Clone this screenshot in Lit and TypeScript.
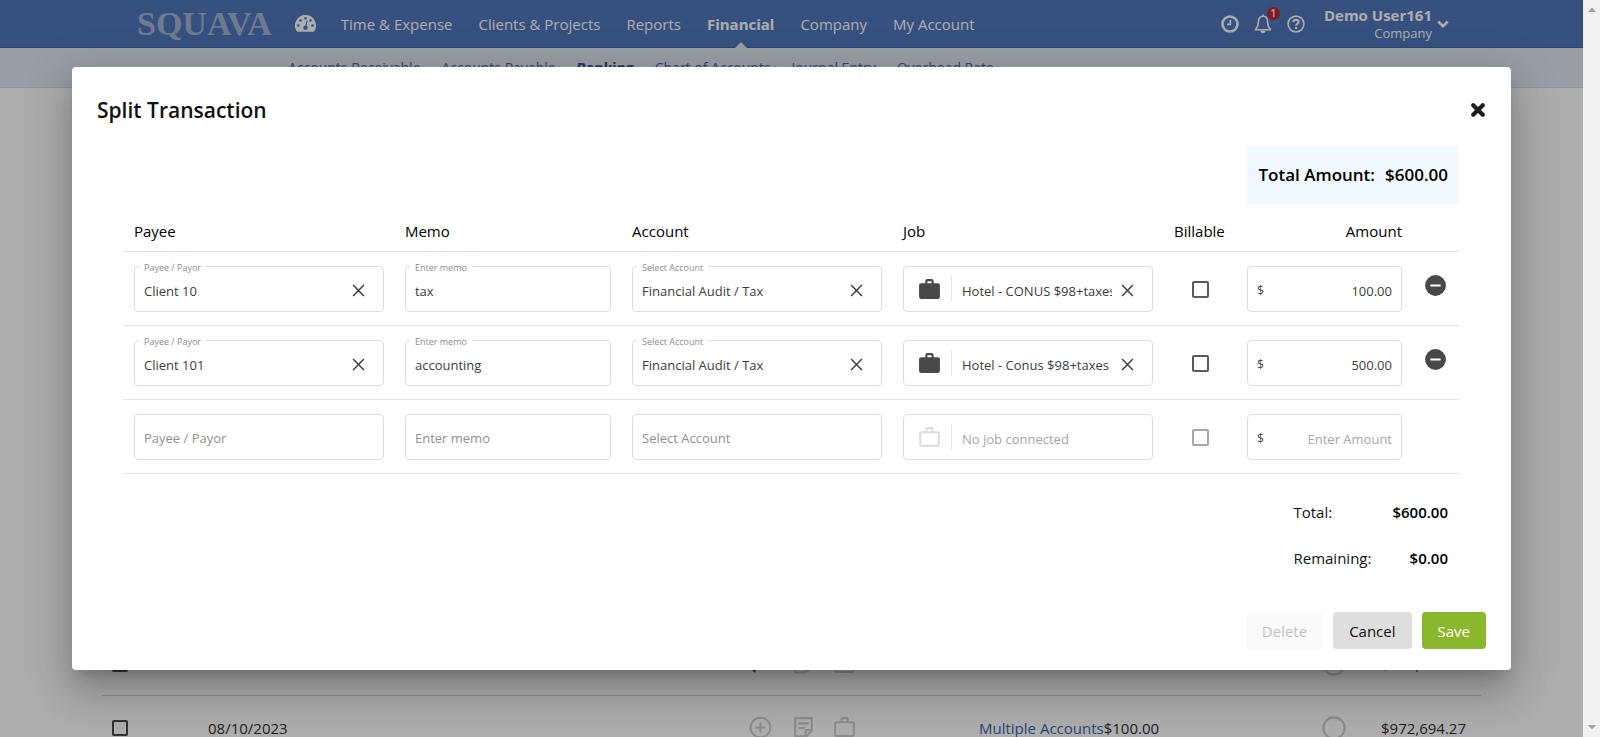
import { LitElement, html, svg, css, nothing } from "lit";
import { customElement, state } from "lit/decorators.js";
import { classMap } from "lit/directives/class-map.js";

const icon = (box: string, size: number, body: unknown, cls = "") =>
  html`<svg class=${cls} viewBox=${box} width=${size} height=${size} aria-hidden="true">${body}</svg>`;

const WORK = svg`<path fill="currentColor" d="M20 6h-4V4c0-1.100-.9-2-2-2h-4c-1.100 0-2 .9-2 2v2H4c-1.110 0-2 .89-2 2v11c0 1.110.89 2 2 2h16c1.110 0 2-.89 2-2V8c0-1.110-.89-2-2-2zm-6 0h-4V4h4v2z"/>`;
const WORK_OUTLINE = svg`<path fill="currentColor" fill-rule="evenodd" d="M14 6V4h-4v2h4zM4 8v11h16V8H4zm16-2c1.110 0 2 .89 2 2v11c0 1.110-.89 2-2 2H4c-1.110 0-2-.89-2-2V8c0-1.110.89-2 2-2h4V4c0-1.110.89-2 2-2h4c1.110 0 2 .89 2 2v2h4z"/>`;
const REMOVE = svg`<circle cx="12" cy="12" r="10" fill="#484848"/><rect x="7" y="11" width="10" height="2" rx="0.500" fill="#fff"/>`;
const CLEAR = svg`<path d="M1 1 11 11M11 1 1 11" stroke="#3a3a3a" stroke-width="1.300" fill="none"/>`;
const ADD_CIRCLE = svg`<g fill="none" stroke="currentColor" stroke-width="2"><circle cx="12" cy="12" r="9.500"/><path d="M12 7v10M7 12h10"/></g>`;
const NOTE = svg`<g fill="none" stroke="currentColor" stroke-width="2"><path d="M4 3h16v12l-5.500 5.500H4z"/><path d="M20 14.500h-6v6M7 8h10M7 12.500h6"/></g>`;
const RING = svg`<circle cx="12" cy="12" r="9.800" fill="none" stroke="currentColor" stroke-width="2"/>`;

const FONT = css`"Open Sans", "Noto Sans", sans-serif`;

interface Split {
  payee: string;
  memo: string;
  account: string;
  job: string;
  amount: string;
}

@customElement("split-dialog")
export class SplitDialog extends LitElement {
  static styles = css`
    :host {
      display: block;
      box-sizing: border-box;
      width: calc(100% - 144px);
      padding: 25px 25px 21px;
      border-radius: 4px;
      background: #fff;
      color: #111;
      font: 15px/20px ${FONT};
      box-shadow: 0 11px 15px -7px rgba(0, 0, 0, 0.2), 0 24px 38px 3px rgba(0, 0, 0, 0.14),
        0 9px 46px 8px rgba(0, 0, 0, 0.12);
    }
    svg {
      display: block;
    }
    button {
      font: inherit;
      color: inherit;
      border: 0;
      padding: 0;
      background: none;
      cursor: pointer;
    }
    .head {
      display: flex;
      align-items: center;
      justify-content: space-between;
      height: 36px;
    }
    h2 {
      margin: 0;
      font-size: 21px;
      font-weight: 600;
      line-height: 36px;
    }
    .body {
      padding: 18px 27px 0 26px;
    }
    .total-box {
      display: flex;
      align-items: center;
      gap: 10px;
      width: fit-content;
      height: 58px;
      margin-left: auto;
      padding: 0 11px;
      background: #f1f9ff;
      font-size: 17px;
      font-weight: 600;
      color: #000;
    }
    table {
      width: 100%;
      table-layout: fixed;
      border-collapse: separate;
      border-spacing: 0;
    }
    .c-memo {
      width: 17%;
    }
    .c-bill {
      width: 73px;
    }
    .c-amount {
      width: 176px;
    }
    .c-action {
      width: 47px;
    }
    th {
      padding: 17px 10px 10px 11px;
      border-bottom: 1px solid #e3e3e3;
      text-align: left;
      font-weight: 400;
      color: #000;
    }
    td {
      padding: 14px 10px 13px 11px;
      border-bottom: 1px solid #e3e3e3;
    }
    th.right {
      text-align: right;
    }
    td.mid {
      text-align: center;
    }
    td.action {
      padding: 0 11px 2px;
    }
    .field {
      position: relative;
      display: flex;
      align-items: center;
      box-sizing: border-box;
      height: 46px;
      padding: 0 9px;
      border: 1px solid #dedede;
      border-radius: 4px;
      font-size: 13px;
    }
    .field label {
      position: absolute;
      top: -8px;
      left: 4px;
      padding: 0 5px;
      background: #fff;
      font-size: 9px;
      line-height: 18px;
      color: #8c8c8c;
    }
    .field.empty label {
      top: 14px;
      font-size: 13px;
      color: #8f8f8f;
      pointer-events: none;
    }
    .field input {
      flex: 1;
      min-width: 0;
      width: 0;
      padding: 4px 0 0;
      border: 0;
      outline: 0;
      background: none;
      font: inherit;
      color: #3c3c3c;
    }
    .field input::placeholder {
      color: #a6a6a6;
      opacity: 1;
    }
    .field .amount {
      text-align: right;
    }
    .field .cur {
      padding-top: 4px;
      font-size: 12px;
      color: #444;
    }
    .clear {
      margin: 2px 9px 0;
    }
    .job {
      padding-left: 13px;
    }
    .job .work {
      color: #484848;
      margin-right: 9px;
    }
    .job .work.off {
      color: #dedede;
    }
    .job input {
      margin-left: 10px;
    }
    .bar {
      width: 1px;
      height: 26px;
      background: #e3e3e3;
    }
    .check {
      appearance: none;
      box-sizing: border-box;
      display: block;
      width: 17px;
      height: 17px;
      margin: 0 auto;
      border: 2px solid #5a5a5a;
      border-radius: 2px;
      background: #fff;
    }
    .check:checked {
      background: #5a5a5a;
    }
    .check:disabled {
      border-color: #a6a6a6;
    }
    .sums {
      display: grid;
      grid-template-columns: auto auto;
      justify-content: end;
      column-gap: 21px;
      row-gap: 22px;
      margin: 26px 0 0;
      padding-right: 11px;
      line-height: 24px;
    }
    .sums dt,
    .sums dd {
      margin: 0;
    }
    .sums dd {
      text-align: right;
      font-weight: 600;
      color: #000;
    }
    .foot {
      display: flex;
      justify-content: flex-end;
      gap: 10px;
      margin-top: 42px;
    }
    .foot button {
      height: 37px;
      padding: 0 16px;
      border-radius: 4px;
      background: #dedede;
    }
    .foot .save {
      background: #8ab72b;
      color: #fff;
    }
    .foot .delete {
      background: #fafafa;
      color: #c2c2c2;
      cursor: default;
    }
  `;

  @state() private rows: Split[] = [
    { payee: "Client 10", memo: "tax", account: "Financial Audit / Tax", job: "Hotel - CONUS $98+taxes", amount: "100.00" },
    { payee: "Client 101", memo: "accounting", account: "Financial Audit / Tax", job: "Hotel - Conus $98+taxes", amount: "500.00" },
    { payee: "", memo: "", account: "", job: "", amount: "" },
  ];

  private update_(i: number, key: keyof Split, value: string) {
    this.rows = this.rows.map((r, n) => (n === i ? { ...r, [key]: value } : r));
  }

  private clearButton(i: number, key: keyof Split) {
    return this.rows[i][key]
      ? html`<button class="clear" aria-label="Clear" @click=${() => this.update_(i, key, "")}>
          ${icon("0 0 12 12", 13, CLEAR)}
        </button>`
      : nothing;
  }

  private field(i: number, key: keyof Split, label: string, clearable: boolean) {
    const id = `${key}-${i}`;
    const value = this.rows[i][key];
    return html`<div class=${classMap({ field: true, empty: !value })}>
      <label for=${id}>${label}</label>
      <input id=${id} .value=${value} @change=${(e: Event) => this.update_(i, key, (e.target as HTMLInputElement).value)} />
      ${clearable ? this.clearButton(i, key) : nothing}
    </div>`;
  }

  private row(r: Split, i: number) {
    const filled = r.payee !== "";
    return html`<tr>
      <td>${this.field(i, "payee", "Payee / Payor", true)}</td>
      <td>${this.field(i, "memo", "Enter memo", false)}</td>
      <td>${this.field(i, "account", "Select Account", true)}</td>
      <td>
        <div class="field job">
          ${icon("0 0 24 24", 25, r.job ? WORK : WORK_OUTLINE, r.job ? "work" : "work off")}
          <span class="bar"></span>
          <input aria-label="Job" placeholder="No job connected" .value=${r.job} />
          ${this.clearButton(i, "job")}
        </div>
      </td>
      <td class="mid"><input class="check" type="checkbox" aria-label="Billable" ?disabled=${!filled} /></td>
      <td>
        <div class="field">
          <span class="cur">$</span>
          <input class="amount" aria-label="Amount" placeholder="Enter Amount" .value=${r.amount} />
        </div>
      </td>
      <td class="action">
        ${filled ? html`<button aria-label="Remove line">${icon("0 0 24 24", 25, REMOVE)}</button>` : nothing}
      </td>
    </tr>`;
  }

  render() {
    return html`
      <div class="head">
        <h2>Split Transaction</h2>
        <button aria-label="Close">
          ${icon("0 0 16 16", 16, svg`<path d="M3.200 3.200 12.800 12.800M12.800 3.200 3.200 12.800" stroke="#1c1c1c" stroke-width="4.200" stroke-linecap="round"/>`)}
        </button>
      </div>
      <div class="body">
        <div class="total-box"><span>Total Amount:</span><span>$600.00</span></div>
        <table>
          <colgroup>
            <col /><col class="c-memo" /><col /><col /><col class="c-bill" /><col class="c-amount" /><col class="c-action" />
          </colgroup>
          <thead>
            <tr>
              <th>Payee</th><th>Memo</th><th>Account</th><th>Job</th><th>Billable</th><th class="right">Amount</th><th></th>
            </tr>
          </thead>
          <tbody>${this.rows.map((r, i) => this.row(r, i))}</tbody>
        </table>
        <dl class="sums">
          <dt>Total:</dt><dd>$600.00</dd>
          <dt>Remaining:</dt><dd>$0.00</dd>
        </dl>
      </div>
      <div class="foot">
        <button class="delete" disabled>Delete</button>
        <button class="cancel">Cancel</button>
        <button class="save">Save</button>
      </div>
    `;
  }
}

@customElement("app-root")
export class AppRoot extends LitElement {
  static styles = css`
    :host {
      display: flex;
      height: 100vh;
      overflow: hidden;
      font: 15px/20px ${FONT};
      color: #333;
    }
    svg {
      display: block;
    }
    a {
      color: inherit;
      text-decoration: none;
    }
    .stage {
      position: relative;
      flex: 1;
      min-width: 0;
      overflow: hidden;
      background: #fff;
    }
    .top {
      display: flex;
      align-items: center;
      box-sizing: border-box;
      height: 48px;
      padding: 0 134px 0 137px;
      background: #5077bb;
      border-bottom: 1px solid #3f66ad;
      color: #fff;
    }
    .logo {
      font: bold 34px/40px "Liberation Serif", serif;
      color: #a3b4d4;
      margin-right: 23px;
    }
    .menu {
      display: flex;
      align-items: center;
      gap: 26px;
      height: 47px;
      margin-left: 25px;
    }
    .menu a {
      display: flex;
      flex-direction: column;
      align-items: center;
      justify-content: center;
      position: relative;
      height: 48px;
      white-space: nowrap;
    }
    .menu .on {
      font-weight: 700;
    }
    .menu .on::after {
      content: "";
      position: absolute;
      bottom: 0;
      border: 6px solid transparent;
      border-top: 0;
      border-bottom-color: #e0e6f1;
    }
    .tools {
      display: flex;
      align-items: center;
      gap: 15px;
      margin-left: auto;
    }
    .bell {
      position: relative;
    }
    .badge {
      position: absolute;
      top: -7px;
      right: -8px;
      width: 13px;
      height: 13px;
      border-radius: 7px;
      background: #c22a2a;
      font: 600 10px/13px ${FONT};
      text-align: center;
    }
    .user {
      display: grid;
      grid-template-columns: auto auto;
      column-gap: 5px;
      align-items: center;
      justify-items: end;
      margin-left: 4px;
      line-height: 18px;
    }
    .user b {
      font-weight: 700;
    }
    .user small {
      font-size: 13px;
    }
    .user svg {
      grid-area: 1 / 2 / 3 / 3;
    }
    .sub {
      display: flex;
      gap: 21px;
      box-sizing: border-box;
      height: 40px;
      padding: 10px 0 0 288px;
      background: #e3e9f4;
      border-bottom: 1px solid #d5dbe6;
      font-size: 14px;
      color: #3f66ad;
    }
    .sub b {
      color: #2453a3;
    }
    .ledger {
      padding: 544px 102px 0;
    }
    .line {
      display: grid;
      grid-template-columns: 106px 1fr 43px 41px 148px 1fr 46px 150px;
      grid-template-columns: 106px 540px 43px 41px 147px 1fr 94px 100px;
      align-items: center;
      height: 63px;
      border-bottom: 1px solid #d4d4d4;
    }
    .tick {
      appearance: none;
      box-sizing: border-box;
      width: 16px;
      height: 16px;
      margin: 0 0 0 10px;
      border: 2px solid #4a4a4a;
      border-radius: 2px;
    }
    .pale {
      color: #cfcfcf;
    }
    .dark {
      color: #111;
    }
    .num {
      text-align: right;
    }
    .link {
      color: #3f66ad;
    }
    .ring {
      justify-self: center;
    }
    .balance {
      padding-right: 18px;
    }
    .veil {
      position: absolute;
      inset: 0;
      display: grid;
      place-items: center;
      background: rgba(0, 0, 0, 0.32);
    }
    .rail {
      display: flex;
      flex-direction: column;
      justify-content: space-between;
      align-items: center;
      box-sizing: border-box;
      width: 17px;
      padding: 7px 0;
      background: #f1f1f1;
      color: #a3a3a3;
    }
  `;

  private line(first: boolean) {
    return html`<div class="line">
      <input class="tick" type="checkbox" aria-label="Select transaction" />
      <span>${first ? nothing : "08/10/2023"}</span>
      ${first
        ? icon("0 0 24 24", 25, svg`<path d="M3 17 7 13v8zM7 16h5v2H7z" fill="currentColor"/>`, "dark")
        : icon("0 0 24 24", 25, ADD_CIRCLE, "pale")}
      ${icon("0 0 24 24", 25, NOTE, "pale")}
      ${icon("0 0 24 24", 25, WORK_OUTLINE, "pale")}
      ${first ? html`<span></span>` : html`<div class="pair"><a class="link" href="#accounts">Multiple Accounts</a><span>$100.00</span></div>`}
      ${icon("0 0 24 24", 26, RING, "pale ring")}
      <span class="num balance">${first ? "$972,594.27" : "$972,694.27"}</span>
    </div>`;
  }

  render() {
    const menu = ["Time & Expense", "Clients & Projects", "Reports", "Financial", "Company", "My Account"];
    const sub = ["Accounts Receivable", "Accounts Payable", "Banking", "Chart of Accounts", "Journal Entry", "Overhead Rate"];
    return html`
      <div class="stage">
        <header class="top">
          <span class="logo">SQUAVA</span>
          <svg viewBox="0 0 21 17" width="21" height="17" aria-hidden="true">
            <path fill="#fff" d="M10.500 0A10.500 10.500 0 0 0 1.600 16q.4.700 1.200.7h15.400q.8 0 1.200-.7A10.500 10.500 0 0 0 10.500 0z" />
            <g fill="#5077bb">
              <circle cx="10.500" cy="3.300" r="1.300" /><circle cx="5.500" cy="5.500" r="1.300" /><circle cx="15.500" cy="5.500" r="1.300" />
              <circle cx="3.400" cy="10.500" r="1.300" /><circle cx="17.600" cy="10.500" r="1.300" /><circle cx="10.500" cy="12.700" r="2.200" />
              <path d="M11.600 5.500 12.600 5.800 11.300 12.500H10z" />
            </g>
          </svg>
          <nav class="menu">
            ${menu.map((m) => html`<a href="#menu" class=${classMap({ on: m === "Financial" })}>${m}</a>`)}
          </nav>
          <div class="tools">
            <svg viewBox="0 0 18 18" width="18" height="18" fill="none" stroke="#fff" aria-hidden="true">
              <circle cx="9" cy="9" r="7.500" stroke-width="2.600" /><path d="M9.300 4.700v4.600H6" stroke-width="1.700" />
            </svg>
            <span class="bell">
              <svg viewBox="0 0 18 20" width="18" height="20" aria-hidden="true">
                <path d="M9 2.300C5.800 2.300 4.500 4.600 4.500 7.500c0 4-1.200 6-3.100 8.200h15.200c-1.900-2.200-3.100-4.200-3.100-8.200 0-2.900-1.300-5.200-4.500-5.200z" fill="none" stroke="#fff" stroke-width="1.600" stroke-linejoin="round" />
                <path d="M8.200.5h1.600V3H8.200zM6.600 16.500h4.800a2.400 2.800 0 0 1-4.800 0z" fill="#fff" />
              </svg>
              <span class="badge">1</span>
            </span>
            <svg viewBox="0 0 18 18" width="18" height="18" fill="none" stroke="#fff" aria-hidden="true">
              <circle cx="9" cy="9" r="7.900" stroke-width="1.600" />
              <path d="M6.300 7.200C6.500 5.400 7.600 4.900 9 4.900s2.600.8 2.600 2.100c0 1.800-2.500 1.700-2.500 3.700M9.100 11.900v2" stroke-width="2.100" />
            </svg>
            <div class="user">
              <b>Demo User161</b>
              <small>Company</small>
              <svg viewBox="0 0 12 8" width="12" height="8" fill="none" aria-hidden="true">
                <path d="M1.300 1.500 6 6.200 10.700 1.500" stroke="#fff" stroke-width="2.500" />
              </svg>
            </div>
          </div>
        </header>
        <nav class="sub">
          ${sub.map((s) => html`<a href="#sub">${s === "Banking" ? html`<b>${s}</b>` : s}</a>`)}
        </nav>
        <main class="ledger">${this.line(true)}${this.line(false)}</main>
        <div class="veil"><split-dialog role="dialog" aria-label="Split Transaction"></split-dialog></div>
      </div>
      <div class="rail" aria-hidden="true">
        <svg viewBox="0 0 8 5" width="8" height="5"><path d="M0 5 4 .5 8 5z" fill="currentColor" /></svg>
        <svg viewBox="0 0 8 5" width="8" height="5"><path d="M0 0 4 4.500 8 0z" fill="currentColor" /></svg>
      </div>
    `;
  }
}
